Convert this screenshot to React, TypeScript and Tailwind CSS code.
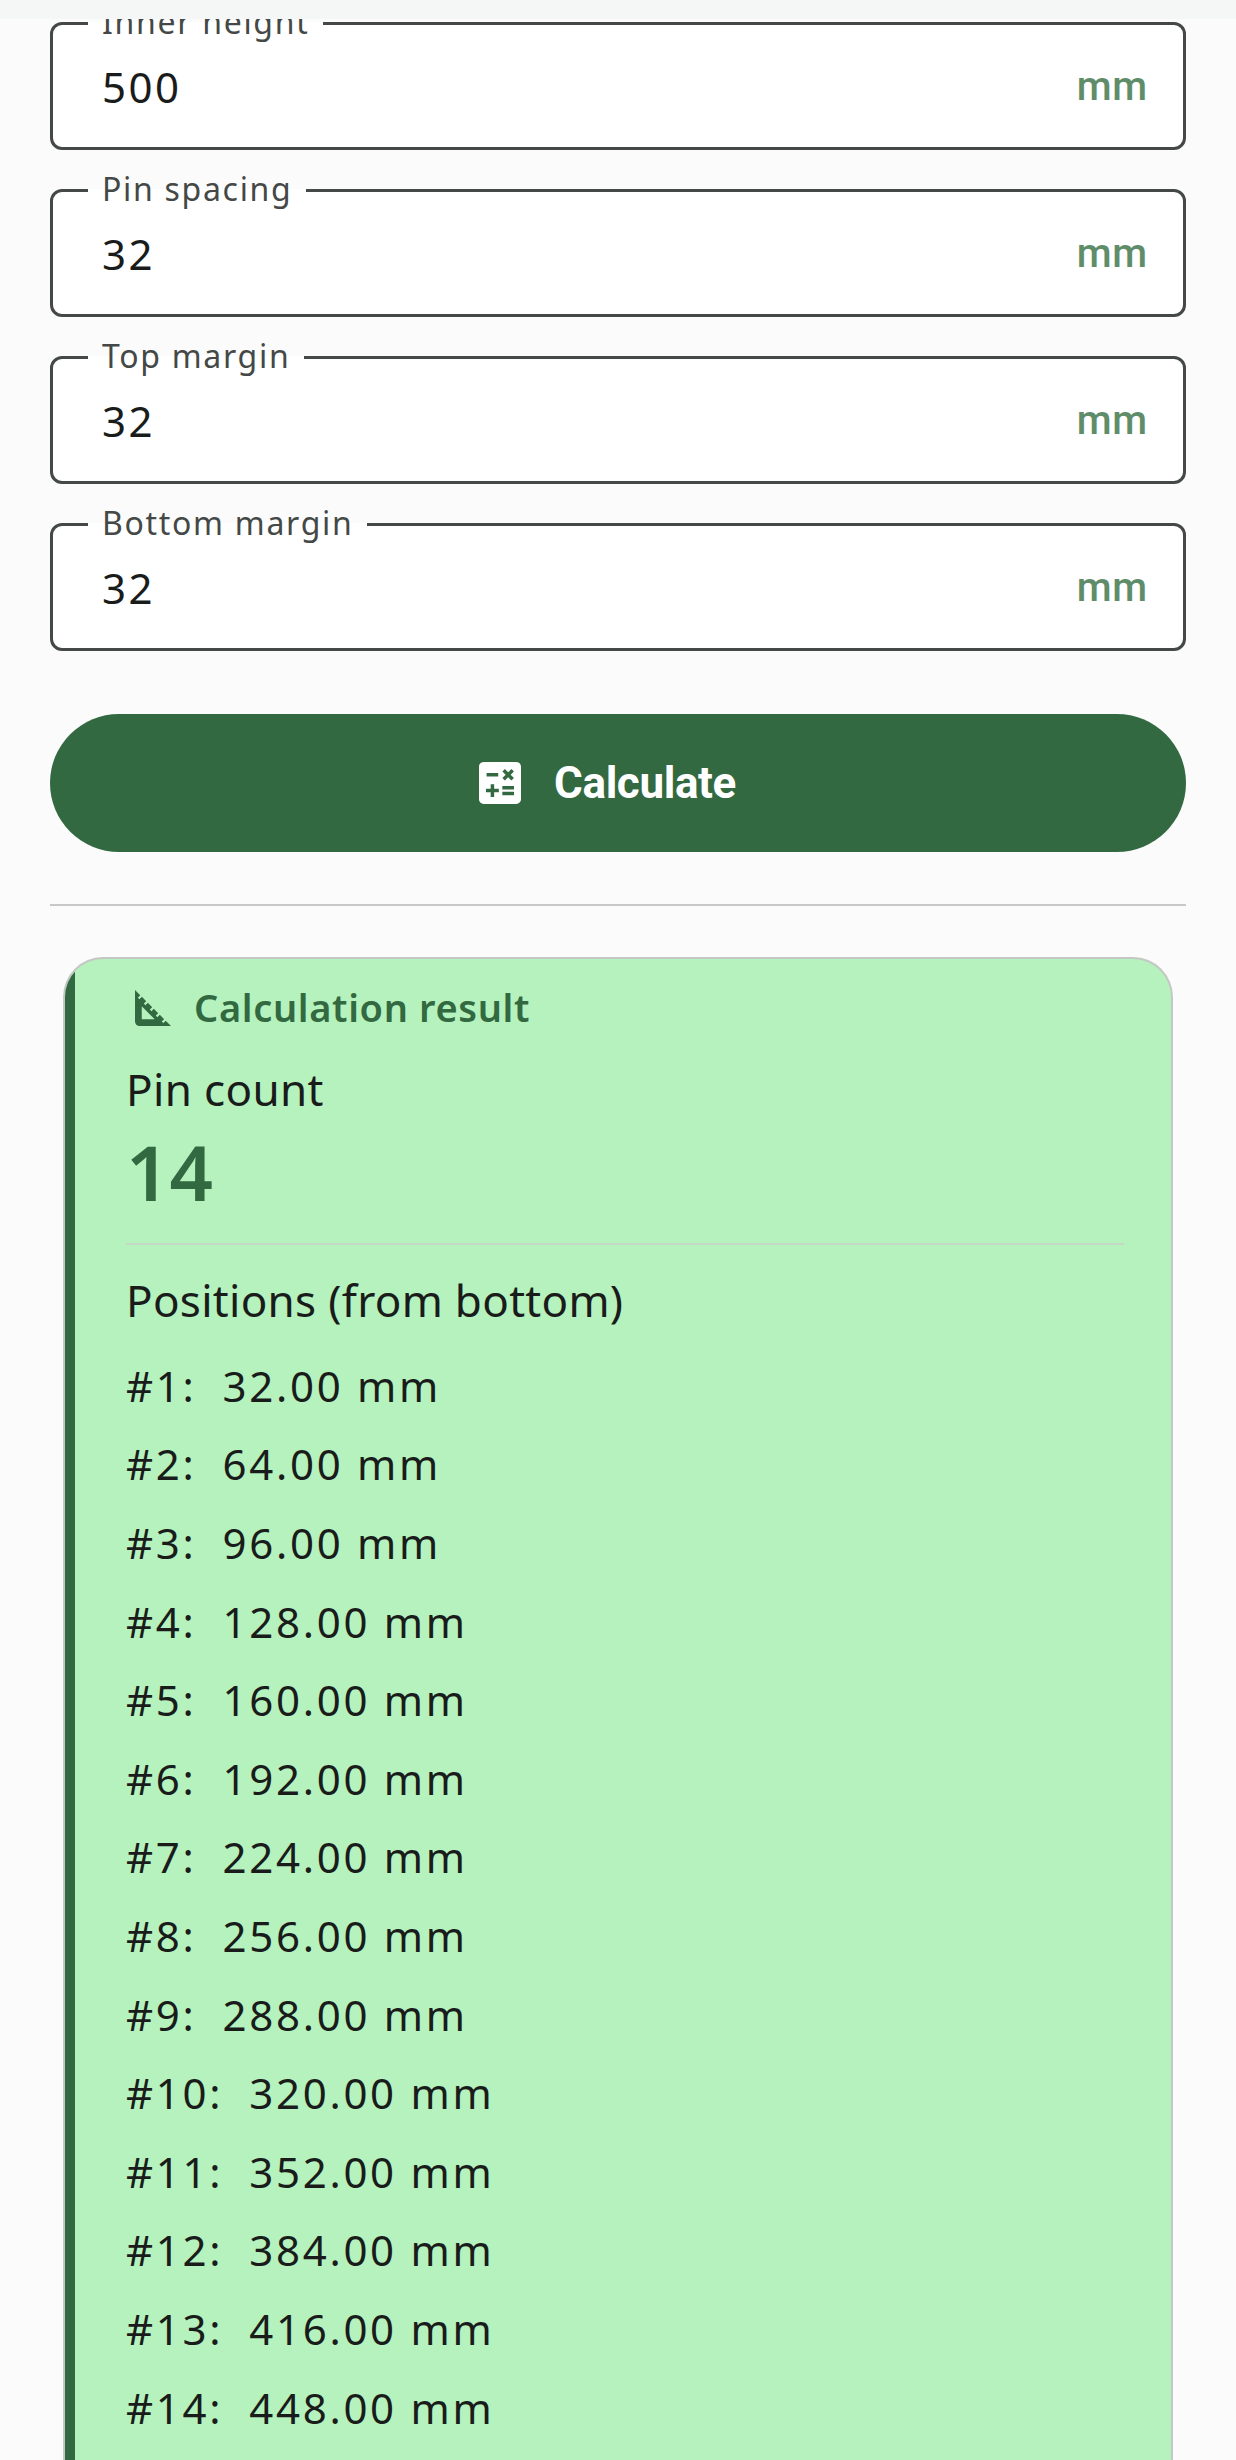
import { MdCalculate, MdSquareFoot } from 'react-icons/md';

const fields = [
  { label: 'Inner height', value: '500' },
  { label: 'Pin spacing', value: '32' },
  { label: 'Top margin', value: '32' },
  { label: 'Bottom margin', value: '32' },
];

const positions = ['32.00', '64.00', '96.00', '128.00', '160.00', '192.00', '224.00', '256.00', '288.00', '320.00', '352.00', '384.00', '416.00', '448.00'];

const App = () => {
  return (
    <div className="relative h-[2460px] overflow-hidden bg-[#fbfbfb] font-['Noto_Sans',sans-serif] text-[#191c1a]">
      {/* app bar scrolled out of view */}
      <div className="absolute inset-x-0 top-0 z-10 h-[19px] bg-[#f4f7f5]" />

      <div className="px-[50px] pt-[22px]">
        <div className="flex flex-col gap-[39px]">
          {fields.map((field) => (
            <fieldset key={field.label} className="h-[128px] rounded-[12px] border-[3px] border-[#444846] bg-white">
              <legend className="ml-[35px] -translate-y-[2px] px-[14px] text-[32px] leading-[0] tracking-[1.7px] text-[#444846]">{field.label}</legend>
              <div className="flex h-[122px] items-center pl-[49px] pr-[35px]">
                <div className="flex-1 text-[42px] tracking-[2.5px]">{field.value}</div>
                <div className="pt-[2px] font-['Roboto',sans-serif] text-[40px] font-medium tracking-[0.8px] text-[#5f8d69]">mm</div>
              </div>
            </fieldset>
          ))}
        </div>

        <button className="mt-[63px] flex h-[138px] w-full items-center justify-center gap-[26px] rounded-full bg-[#336941] pr-[28px] font-['Roboto',sans-serif] text-[44px] font-bold tracking-[-0.4px] text-white">
          <MdCalculate className="h-[56px] w-[56px]" />
          Calculate
        </button>

        <div className="mt-[52px] h-[2px] bg-[#c8c8c8]" />
      </div>

      <div className="relative mx-[63px] mt-[51px] overflow-hidden rounded-t-[40px] border-2 border-b-0 border-[#c4c8c4] bg-[#b5f2bd] pb-[100px] pl-[61px] pr-[47px] pt-[20px]">
        <div className="absolute inset-y-0 left-0 w-[10px] bg-[#336941]" />
        <div className="flex items-center gap-[14px] text-[38px] font-semibold tracking-[0.65px] text-[#336941]">
          <MdSquareFoot className="h-[54px] w-[54px]" />
          Calculation result
        </div>
        <div className="mt-[23px] text-[44px] leading-[60px] tracking-[0.35px]">Pin count</div>
        <div className="mt-[8px] text-[76px] font-semibold leading-[90px] text-[#336941]">14</div>
        <div className="mt-[26px] h-[2px] bg-[#c4d8c4]" />
        <div className="mt-[25px] text-[44px] leading-[60px] tracking-[0.3px]">Positions (from bottom)</div>
        <div className="mt-[16px]">
          {positions.map((pos, index) => (
            <div key={pos} className="flex h-[78.6px] items-center gap-[26px] text-[42px] tracking-[2.7px]">
              <span>#{index + 1}:</span>
              <span>{pos} mm</span>
            </div>
          ))}
        </div>
      </div>
    </div>
  );
};

export default App;
